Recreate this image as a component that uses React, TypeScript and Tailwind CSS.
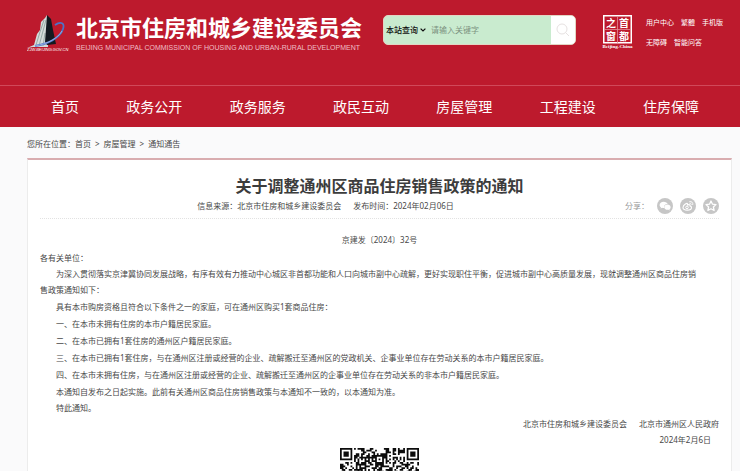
import React from "react";

const navItems = ["首页", "政务公开", "政务服务", "政民互动", "房屋管理", "工程建设", "住房保障"];

const conditions = [
  "一、在本市未拥有住房的本市户籍居民家庭。",
  "二、在本市已拥有1套住房的通州区户籍居民家庭。",
  "三、在本市已拥有1套住房，与在通州区注册或经营的企业、疏解搬迁至通州区的党政机关、企事业单位存在劳动关系的本市户籍居民家庭。",
  "四、在本市未拥有住房，与在通州区注册或经营的企业、疏解搬迁至通州区的企事业单位存在劳动关系的非本市户籍居民家庭。",
];

function TowerLogo() {
  return (
    <svg viewBox="0 0 42 37" className="h-[37px] w-[42px] shrink-0" aria-hidden="true">
      <path d="M0 33 L7 30 L10 19 L13 15 L14 7 L18 3 L20 0 L21 32 L6 32 Z" fill="#d5dcda" />
      <path d="M9 30 L13 17 L17 5 M12 31 L16 16 L19 5 M16 31 L18 18" stroke="#8fa5a0" strokeWidth="0.9" fill="none" />
      <path d="M20 0 L24 4 L26 15 L29 29 L20 30 L18 27 Z" fill="#121a20" />
      <path d="M28 10 C34 6 38 8 36 14 C33 23 21 29 8 31" stroke="#4d73c8" strokeWidth="1.8" fill="none" />
      <path d="M35 16 C31 23 21 29 8 31" stroke="#a9bce6" strokeWidth="0.8" fill="none" />
      <text x="0" y="36" fontSize="4" fontStyle="italic" fill="#fff" fontFamily="Liberation Sans, sans-serif">
        ZJW.BEIJING.GOV.CN
      </text>
    </svg>
  );
}

function CapitalSeal() {
  return (
    <svg viewBox="0 0 34 34" className="h-[34px] w-[34px]" role="img" aria-label="首都之窗">
      <rect x="2.75" y="0.75" width="27.5" height="27" fill="none" stroke="#fff" strokeWidth="1.5" />
      <path d="M16.5 1V28M3 14.5H30" stroke="#e58a95" strokeWidth="0.8" />
      <g fill="#fff" fontSize="10" fontWeight="700" fontFamily="Noto Sans CJK SC, sans-serif" textAnchor="middle">
        <text x="10" y="12">之</text>
        <text x="23" y="12">首</text>
        <text x="10" y="25">窗</text>
        <text x="23" y="25">都</text>
      </g>
      <text x="16.5" y="33" fontSize="5" fontWeight="700" fill="#fff" textAnchor="middle" fontFamily="Liberation Serif, serif">
        Beijing-China
      </text>
    </svg>
  );
}

const QR_SIZE = 45;

function isDark(x: number, y: number): boolean {
  const corners = [[0, 0], [QR_SIZE - 7, 0], [0, QR_SIZE - 7]];
  for (const [cx, cy] of corners) {
    const dx = x - cx;
    const dy = y - cy;
    if (dx >= -1 && dx <= 7 && dy >= -1 && dy <= 7) {
      const ring = Math.max(Math.abs(dx - 3), Math.abs(dy - 3));
      return ring === 3 || ring <= 1;
    }
  }
  const ring = Math.max(Math.abs(x - 22), Math.abs(y - 6));
  if (ring <= 2) return ring !== 1;
  if (y === 6) return x % 2 === 0;
  if (x === 6) return y % 2 === 0;
  let h = (x * 374761393 + y * 668265263) | 0;
  h = Math.imul(h ^ (h >>> 13), 1274126177);
  return ((h ^ (h >>> 16)) & 7) < 4;
}

function QrCode() {
  let d = "";
  for (let y = 0; y < QR_SIZE; y++) {
    for (let x = 0; x < QR_SIZE; x++) {
      if (isDark(x, y)) d += `M${x} ${y}h1v1h-1z`;
    }
  }
  return (
    <svg viewBox="0 0 45 45" className="h-[79px] w-[79px]" role="img" aria-label="二维码">
      <path d={d} fill="#0c0c0c" />
    </svg>
  );
}

const shareButton = "flex h-4 w-4 items-center justify-center rounded-full bg-[#c6c6c6]";

function ShareBar() {
  return (
    <div className="flex items-center">
      <span className="mr-2 text-[8px] text-[#999]">分享：</span>
      <div className="flex gap-[7px]">
        <button type="button" aria-label="微信" className={shareButton}>
          <svg viewBox="0 0 16 16" className="h-4 w-4" fill="#fff">
            <path d="M6.6 3.8c-2.300 0-4 1.400-4 3.100 0 1 .6 1.800 1.400 2.400l-.4 1.300 1.500-.8c.9.200 1.500.2 2 .1-.5-2.200 1.400-3.900 3.500-3.800-.4-1.400-2-2.300-4-2.300z" />
            <path d="M13.600 9.200c0-1.500-1.500-2.600-3.200-2.600s-3.200 1.100-3.200 2.600 1.500 2.600 3.200 2.600c.4 0 .8 0 1.100-.1l1.200.7-.3-1.100c.7-.5 1.200-1.200 1.200-2.100z" />
          </svg>
        </button>
        <button type="button" aria-label="微博" className={shareButton}>
          <svg viewBox="0 0 16 16" className="h-4 w-4" fill="none" stroke="#fff">
            <path d="M7.600 6.400c.2-1.300-1-1.200-2.200-.4-1.500 1-2.400 2.400-2.400 3.500 0 1.600 1.900 2.600 4.200 2.600 2.500 0 4.300-1.300 4.300-2.700 0-.9-.7-1.300-1.500-1.500.3-1.300-.8-1.500-2.400-1z" strokeWidth="1.100" />
            <circle cx="7" cy="9.400" r="1.300" />
            <path d="M9.700 3.600c2-.5 3.600 1.100 3.100 3M9.900 5.300c.9-.2 1.500.4 1.300 1.200" strokeLinecap="round" strokeWidth=".9" />
          </svg>
        </button>
        <button type="button" aria-label="收藏" className={shareButton}>
          <svg viewBox="0 0 16 16" className="h-4 w-4" fill="none" stroke="#fff" strokeWidth="1.300" strokeLinejoin="round">
            <path d="M8 3l1.500 3.200 3.500.4-2.600 2.400.7 3.500L8 10.800l-3.100 1.700.7-3.500L3 6.600l3.500-.4z" />
          </svg>
        </button>
      </div>
    </div>
  );
}

export default function App() {
  return (
    <div className="h-screen overflow-hidden bg-[#fafafb] font-['Noto_Sans','Noto_Sans_CJK_SC',sans-serif] text-[8px] leading-4 text-[#484848]">
      <header className="bg-[#bd1a2d] text-white">
        <div className="flex h-[85px] items-start pt-[15px] pr-[17px] pl-[27px]">
          <TowerLogo />
          <div className="ml-[7px] shrink-0">
            <h1 className="text-[22px] leading-6 font-bold whitespace-nowrap">北京市住房和城乡建设委员会</h1>
            <p className="mt-[3px] font-['Liberation_Sans',sans-serif] text-[7px] leading-3 whitespace-nowrap text-[#efbfc5]">
              BEIJING MUNICIPAL COMMISSION OF HOUSING AND URBAN-RURAL DEVELOPMENT
            </p>
          </div>
          <form
            className="ml-auto flex h-[30px] w-[193px] shrink-0 overflow-hidden rounded-[5px] border border-[#e3d5c4] bg-[#c9ebcf]"
            onSubmit={(e) => e.preventDefault()}
          >
            <div className="flex items-center pl-[2px]">
              <select aria-label="查询范围" className="w-[34px] appearance-none bg-transparent text-[8px] font-medium text-[#111]">
                <option>本站查询</option>
              </select>
              <svg viewBox="0 0 6 4" className="h-1 w-[6px]" fill="none" stroke="#111" strokeWidth="1.200" aria-hidden="true">
                <path d="M.6.6L3 3 5.400.6" />
              </svg>
            </div>
            <input
              type="text"
              aria-label="搜索关键字"
              placeholder="请输入关键字"
              className="ml-[5px] min-w-0 flex-1 bg-transparent text-[8px] outline-none placeholder:text-[#7c9180]"
            />
            <button type="submit" aria-label="搜索" className="flex w-6 items-center justify-center bg-white">
              <svg viewBox="0 0 14 14" className="h-[14px] w-[14px]" fill="none" stroke="#e6e1e1">
                <circle cx="6" cy="6" r="5" />
                <path d="M9.600 9.600L13 13" />
              </svg>
            </button>
          </form>
          <div className="ml-[25px] shrink-0">
            <CapitalSeal />
          </div>
          <div className="ml-[11px] flex shrink-0 flex-col gap-1 text-[7px] whitespace-nowrap">
            <div className="flex gap-[7px]">
              <a href="#user">用户中心</a>
              <a href="#traditional">繁體</a>
              <a href="#mobile">手机版</a>
            </div>
            <div className="flex gap-[7px]">
              <a href="#accessible">无障碍</a>
              <a href="#qa">智能问答</a>
            </div>
          </div>
        </div>
        <nav className="flex h-[42px] items-center justify-between border-t border-[#d0495a] pr-[41px] pl-[51px] text-sm">
          {navItems.map((item) => (
            <a key={item} href={`#${item}`} className="whitespace-nowrap">
              {item}
            </a>
          ))}
        </nav>
      </header>

      <main className="pr-2 pl-[27px]">
        <nav aria-label="您所在位置" className="flex gap-1 pt-[9px] pb-[6px]">
          <span>
            您所在位置：<a href="#home">首页</a>
          </span>
          <span>&gt;</span>
          <a href="#housing">房屋管理</a>
          <span>&gt;</span>
          <a href="#notice">通知通告</a>
        </nav>

        <article className="border-x border-t-2 border-x-[#ececec] border-t-[#d9adb0] bg-white px-3 pt-[14px]">
          <h2 className="text-center text-[16px] leading-6 font-bold text-[#3c3c3c]">关于调整通州区商品住房销售政策的通知</h2>
          <div className="grid grid-cols-[1fr_auto_1fr] items-center border-b border-dotted border-[#e2e2e2] pb-1">
            <div className="col-start-2 flex gap-3 pr-[108px]">
              <span>信息来源：北京市住房和城乡建设委员会</span>
              <span>发布时间：2024年02月06日</span>
            </div>
            <div className="flex justify-end">
              <ShareBar />
            </div>
          </div>

          <p className="pt-[13px] text-center">京建发〔2024〕32号</p>
          <p className="mt-[2px]">各有关单位：</p>
          <p className="indent-4">
            为深入贯彻落实京津冀协同发展战略，有序有效有力推动中心城区非首都功能和人口向城市副中心疏解，更好实现职住平衡，促进城市副中心高质量发展，现就调整通州区商品住房销
            <br />
            售政策通知如下：
          </p>
          <p className="mt-px indent-4">具有本市购房资格且符合以下条件之一的家庭，可在通州区购买1套商品住房：</p>
          <ol className="mt-px flex flex-col gap-px pl-4">
            {conditions.map((text) => (
              <li key={text}>{text}</li>
            ))}
          </ol>
          <p className="mt-px indent-4">本通知自发布之日起实施。此前有关通州区商品住房销售政策与本通知不一致的，以本通知为准。</p>
          <p className="indent-4">特此通知。</p>
          <footer className="text-right">
            <p className="flex justify-end gap-3">
              <span>北京市住房和城乡建设委员会</span>
              <span>北京市通州区人民政府</span>
            </p>
            <p className="pr-2">2024年2月6日</p>
          </footer>
          <div className="flex justify-center">
            <QrCode />
          </div>
        </article>
      </main>
    </div>
  );
}
